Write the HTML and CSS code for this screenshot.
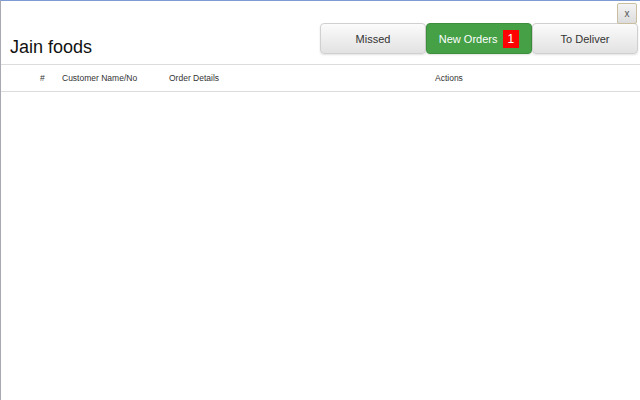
FILE: index.html
```html
<!DOCTYPE html>
<html lang="en">
<head>
  <meta charset="UTF-8" />
  <title>Jain foods</title>
  <link rel="stylesheet" href="styles.css">
</head>
<body>
  <div class="window">
    <button class="close-btn">x</button>
    <div class="top-bar">
      <h1>Jain foods</h1>
      <div class="tabs">
        <button class="tab">Missed</button>
        <button class="tab active">New Orders <span class="badge">1</span></button>
        <button class="tab">To Deliver</button>
      </div>
    </div>
    <table class="orders">
      <thead>
        <tr>
          <th class="col-num">#</th>
          <th class="col-name">Customer Name/No</th>
          <th class="col-details">Order Details</th>
          <th class="col-actions">Actions</th>
        </tr>
      </thead>
      <tbody></tbody>
    </table>
  </div>
</body>
</html>
```

FILE: styles.css
```css
body {
  margin: 0;
  font-family: 'Liberation Sans', Arial, sans-serif;
  background-color: #fff;
  color: #222;
}
.window {
  position: relative;
  height: 400px;
  box-sizing: border-box;
  border-top: 1px solid #7f9bd4;
  border-left: 1px solid #a9a9b4;
}
.close-btn {
  position: absolute;
  top: 2px;
  right: 3px;
  width: 20px;
  height: 21px;
  padding: 0;
  font-family: 'Liberation Sans', Arial, sans-serif;
  font-size: 10px;
  color: #555;
  background: linear-gradient(#f4f4f4, #dcdcdc);
  border: 1px solid #c9bfa0;
  border-radius: 2px;
}
.top-bar {
  display: flex;
  justify-content: space-between;
  align-items: flex-end;
  padding: 0 2px 0 9px;
  height: 63px;
  border-bottom: 1px solid #dcdcdc;
}
h1 {
  margin: 0 0 6px;
  font-size: 18px;
  font-weight: normal;
  color: #111;
}
.tabs {
  display: flex;
  margin-bottom: 10px;
}
.tab {
  width: 106px;
  height: 31px;
  padding: 0;
  font-family: 'Liberation Sans', Arial, sans-serif;
  font-size: 11px;
  color: #333;
  background: linear-gradient(#fbfbfb, #e2e2e2);
  border: 1px solid #d0d0d0;
  border-radius: 4px;
  box-shadow: 0 1px 2px rgba(0, 0, 0, 0.12);
}
.tab.active {
  color: #fff;
  background: #45a046;
  border-color: #3d8f3e;
}
.badge {
  display: inline-block;
  padding: 2px 5px;
  margin-left: 2px;
  background-color: #f00;
  color: #fff;
  font-size: 12px;
}
.orders {
  width: 100%;
  border-collapse: collapse;
  font-size: 8.5px;
  color: #333;
}
.orders th {
  height: 26px;
  font-weight: normal;
  text-align: left;
  border-bottom: 1px solid #dcdcdc;
  padding: 0;
}
.col-num {
  width: 61px;
  padding-left: 39px !important;
  box-sizing: border-box;
}
.col-name {
  width: 107px;
}
.col-details {
  width: 266px;
}
```
